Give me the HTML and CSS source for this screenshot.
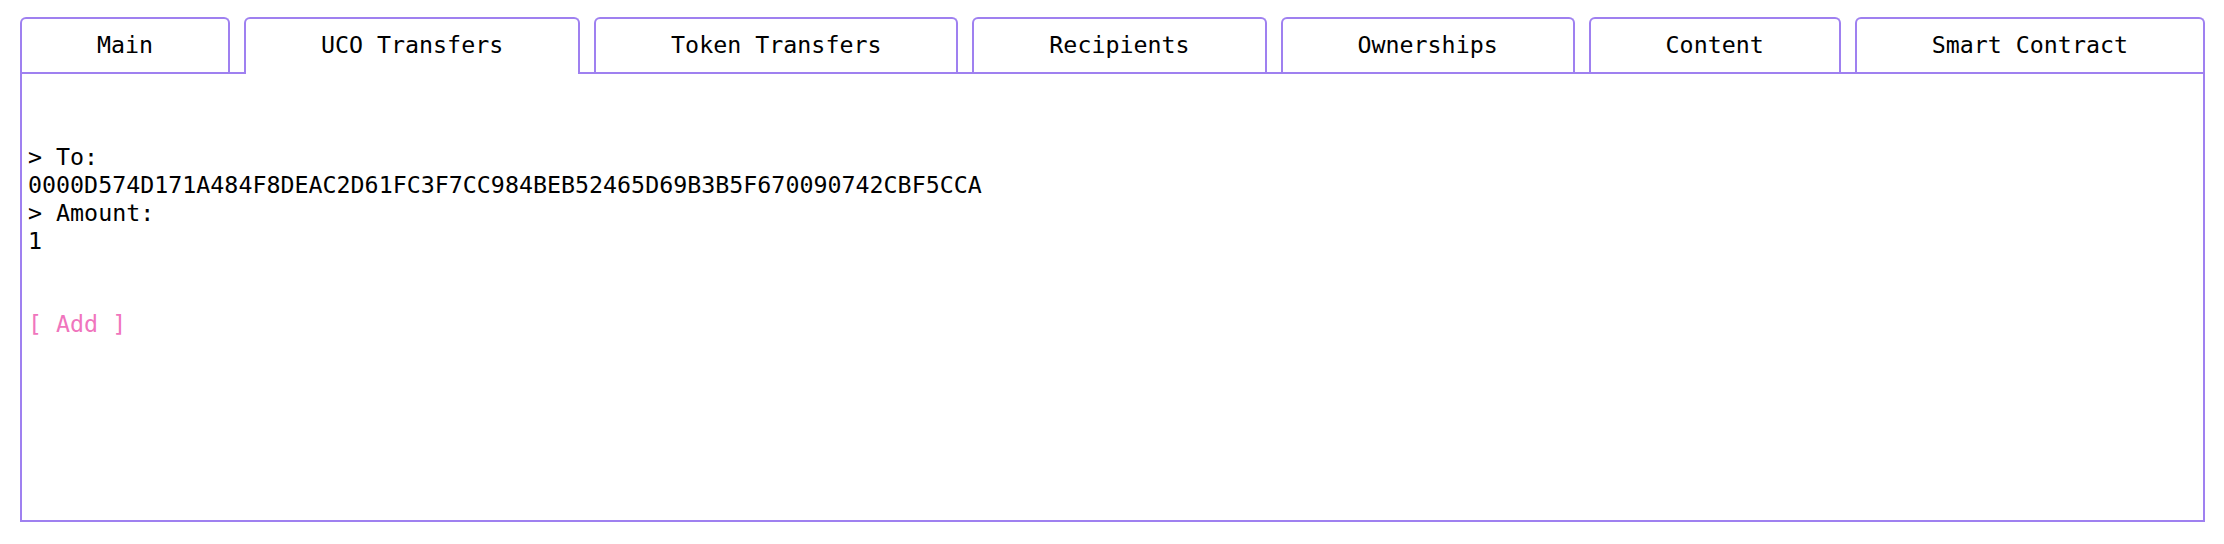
FILE: index.html
```html
<!DOCTYPE html>
<html lang="en">
<head>
<meta charset="utf-8">
<title>Transaction builder</title>
<link rel="stylesheet" href="styles.css">
</head>
<body>
<div class="frame">
  <nav class="tabs">
    <div class="tab">Main</div>
    <div class="tab tab-active">UCO Transfers</div>
    <div class="tab">Token Transfers</div>
    <div class="tab">Recipients</div>
    <div class="tab">Ownerships</div>
    <div class="tab">Content</div>
    <div class="tab">Smart Contract</div>
  </nav>
  <section class="panel">
    <div class="transfer">
      <div class="line">&gt; To:</div>
      <div class="line">0000D574D171A484F8DEAC2D61FC3F7CC984BEB52465D69B3B5F670090742CBF5CCA</div>
      <div class="line">&gt; Amount:</div>
      <div class="line">1</div>
    </div>
    <div class="add">[ Add ]</div>
  </section>
</div>
</body>
</html>
```
FILE: styles.css
```css
html, body {
  margin: 0;
  padding: 0;
  background: #ffffff;
}

body {
  font-family: "DejaVu Sans Mono", "Liberation Mono", monospace;
  font-size: 23.3px;
  line-height: 28px;
  color: #000000;
}

.frame {
  display: flex;
  flex-direction: column;
  height: 505px;
  margin: 17px 19px 0 20px;
}

.tabs {
  display: flex;
  gap: 14px;
  position: relative;
  z-index: 1;
  margin-bottom: -2px;
}

.tab {
  flex: 1 1 auto;
  text-align: center;
  padding: 12px 0 15px;
  border: 2px solid #9f80f0;
  border-bottom: none;
  border-radius: 6px 6px 0 0;
  background: transparent;
  white-space: nowrap;
}

.tab-active {
  background: #ffffff;
}

.panel {
  flex: 1 1 auto;
  border: 2px solid #9f80f0;
  padding: 69px 6px 0;
}

.line {
  white-space: nowrap;
}

.add {
  margin-top: 55px;
  color: #f075bd;
}
```
